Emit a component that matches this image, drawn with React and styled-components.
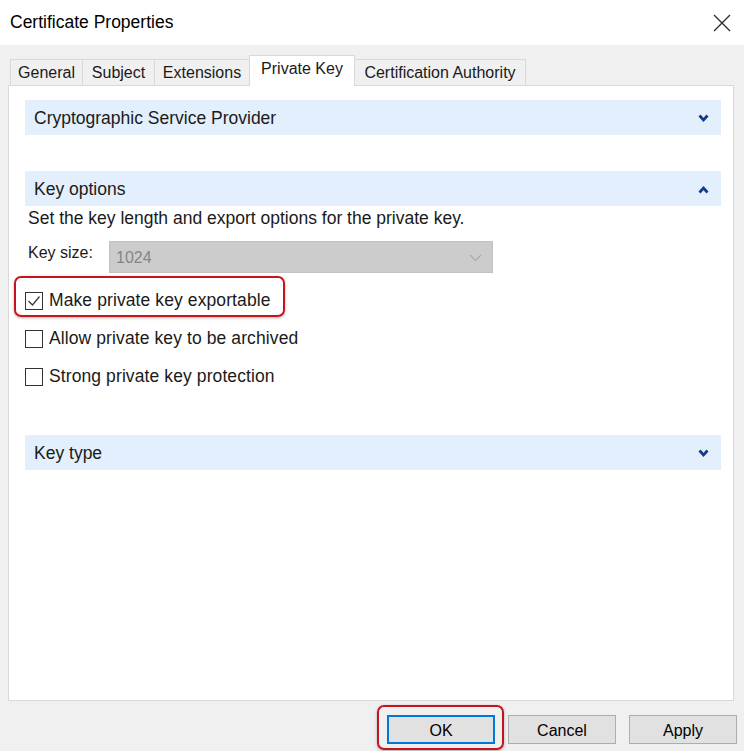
import React from "react";
import styled, { createGlobalStyle } from "styled-components";

const GlobalStyle = createGlobalStyle`
  body {
    margin: 0;
    font-family: "Liberation Sans", Arial, sans-serif;
    color: #1a1a1a;
  }
`;

const Window = styled.div`
  width: 744px;
  height: 751px;
  overflow: hidden;
  display: flex;
  flex-direction: column;
  background: #f0f0f0;
`;

const TitleBar = styled.div`
  height: 45px;
  flex-shrink: 0;
  background: #ffffff;
  display: flex;
  align-items: center;
  justify-content: space-between;
  padding: 0 13px 0 10px;
`;

const Title = styled.div`
  font-size: 17.5px;
  color: #000;
`;

const CloseIcon = styled.svg`
  width: 18px;
  height: 18px;
  display: block;
`;

const Content = styled.div`
  padding: 10px 10px 0 8px;
  display: flex;
  flex-direction: column;
`;

const TabStrip = styled.div`
  height: 30px;
  display: flex;
  align-items: flex-start;
  padding-left: 2px;
  position: relative;
  z-index: 1;
`;

const Tab = styled.div`
  width: ${(p) => p.$width}px;
  box-sizing: border-box;
  margin-left: -1px;
  font-size: 16px;
  display: flex;
  justify-content: center;
  align-items: center;
  border: 1px solid #d9d9d9;
  border-bottom: none;
  background: ${(p) => (p.$active ? "#ffffff" : "#f0f0f0")};
  height: ${(p) => (p.$active ? 31 : 26)}px;
  margin-top: ${(p) => (p.$active ? 0 : 4)}px;
  padding-bottom: ${(p) => (p.$active ? 5 : 0)}px;
  padding-top: 1px;
  color: #1a1a1a;
  &:first-child {
    margin-left: 0;
  }
`;

const Panel = styled.div`
  height: 616px;
  box-sizing: border-box;
  background: #ffffff;
  border: 1px solid #d9d9d9;
  padding: 14px 12px 0 16px;
  display: flex;
  flex-direction: column;
  align-items: stretch;
`;

const SectionHeader = styled.div`
  height: 35px;
  flex-shrink: 0;
  background: #e3effc;
  display: flex;
  align-items: center;
  justify-content: space-between;
  padding: 1px 12px 0 9px;
  box-sizing: border-box;
  font-size: 17.5px;
  color: #1a1a1a;
  margin-top: ${(p) => p.$gap || 0}px;
`;

const Chevron = styled.svg`
  width: 11px;
  height: 9px;
  display: block;
`;

const Description = styled.div`
  font-size: 17.5px;
  line-height: 22px;
  padding-left: 3px;
  margin-top: 1px;
`;

const SizeRow = styled.div`
  margin-top: 12px;
  display: flex;
  align-items: flex-start;
  padding-left: 3px;
`;

const SizeLabel = styled.div`
  width: 81px;
  font-size: 16px;
  line-height: 20px;
  padding-top: 2px;
`;

const Combo = styled.div`
  width: 384px;
  height: 32px;
  box-sizing: border-box;
  background: #cccccc;
  border: 1px solid #c2c2c2;
  display: flex;
  align-items: center;
  justify-content: space-between;
  padding: 2px 10px 0 6px;
  font-size: 16px;
  color: #858585;
`;

const ComboArrow = styled.svg`
  width: 13px;
  height: 8px;
  display: block;
`;

const Checks = styled.div`
  margin-top: 8px;
  display: flex;
  flex-direction: column;
  align-items: flex-start;
`;

const CheckRow = styled.div`
  position: relative;
  height: 38px;
  display: inline-flex;
  align-items: center;
  gap: 6px;
  font-size: 17.5px;
  letter-spacing: 0.1px;
`;

const Box = styled.span`
  width: 18px;
  height: 18px;
  box-sizing: border-box;
  border: 1px solid #333333;
  background: #ffffff;
  display: flex;
  align-items: center;
  justify-content: center;
  flex-shrink: 0;
  margin-top: 2px;
`;

const Highlight = styled.div`
  position: absolute;
  top: ${(p) => p.$top}px;
  left: ${(p) => p.$left}px;
  right: ${(p) => p.$right}px;
  bottom: ${(p) => p.$bottom}px;
  border: 2.5px solid #c4151c;
  border-radius: 7px;
  box-shadow: 0 1px 3px rgba(0, 0, 0, 0.3);
  pointer-events: none;
`;

const ButtonRow = styled.div`
  display: flex;
  justify-content: flex-end;
  gap: 13px;
  padding: 14px 7px 0 0;
`;

const ButtonWrap = styled.div`
  position: relative;
`;

const Button = styled.button`
  width: 108px;
  height: 29px;
  box-sizing: border-box;
  background: #e1e1e1;
  border: ${(p) => (p.$primary ? "2px solid #0078d7" : "1px solid #adadad")};
  font-family: "Liberation Sans", Arial, sans-serif;
  font-size: 16px;
  color: #000;
  padding: 3px 0 0;
`;

const ChevronIcon = ({ up }) => (
  <Chevron viewBox="0 0 11 9">
    <polyline
      points={up ? "1.5,7.5 5.5,3 9.5,7.5" : "1.5,1.5 5.5,6 9.5,1.5"}
      fill="none"
      stroke="#16378a"
      strokeWidth="2.7"
    />
  </Chevron>
);

const Checkbox = ({ checked, label, highlight }) => (
  <CheckRow>
    <Box>
      {checked && (
        <svg width="14" height="14" viewBox="0 0 14 14">
          <polyline
            points="1.5,7 5.5,11 12.5,2.5"
            fill="none"
            stroke="#3a3a3a"
            strokeWidth="1.3"
          />
        </svg>
      )}
    </Box>
    {label}
    {highlight && <Highlight $top={-5} $left={-11} $right={-14} $bottom={2} />}
  </CheckRow>
);

const tabs = [
  { label: "General", width: 73 },
  { label: "Subject", width: 73 },
  { label: "Extensions", width: 96 },
  { label: "Private Key", width: 106, active: true },
  { label: "Certification Authority", width: 172 },
];

export default function App() {
  return (
    <>
      <GlobalStyle />
      <Window>
        <TitleBar>
          <Title>Certificate Properties</Title>
          <CloseIcon viewBox="0 0 18 18">
            <path d="M1 1 L17 17 M17 1 L1 17" stroke="#2b2b2b" strokeWidth="1.3" />
          </CloseIcon>
        </TitleBar>
        <Content>
          <TabStrip>
            {tabs.map((t) => (
              <Tab key={t.label} $width={t.width} $active={t.active}>
                {t.label}
              </Tab>
            ))}
          </TabStrip>
          <Panel>
            <SectionHeader>
              Cryptographic Service Provider
              <ChevronIcon />
            </SectionHeader>
            <SectionHeader $gap={36}>
              Key options
              <ChevronIcon up />
            </SectionHeader>
            <Description>
              Set the key length and export options for the private key.
            </Description>
            <SizeRow>
              <SizeLabel>Key size:</SizeLabel>
              <Combo>
                1024
                <ComboArrow viewBox="0 0 13 8">
                  <polyline
                    points="1,1 6.5,6.5 12,1"
                    fill="none"
                    stroke="#a9a9a9"
                    strokeWidth="1.2"
                  />
                </ComboArrow>
              </Combo>
            </SizeRow>
            <Checks>
              <Checkbox checked highlight label="Make private key exportable" />
              <Checkbox label="Allow private key to be archived" />
              <Checkbox label="Strong private key protection" />
            </Checks>
            <SectionHeader $gap={40}>
              Key type
              <ChevronIcon />
            </SectionHeader>
          </Panel>
        </Content>
        <ButtonRow>
          <ButtonWrap>
            <Button $primary>OK</Button>
            <Highlight $top={-10} $left={-10} $right={-9} $bottom={-6} />
          </ButtonWrap>
          <ButtonWrap>
            <Button>Cancel</Button>
          </ButtonWrap>
          <ButtonWrap>
            <Button>Apply</Button>
          </ButtonWrap>
        </ButtonRow>
      </Window>
    </>
  );
}
